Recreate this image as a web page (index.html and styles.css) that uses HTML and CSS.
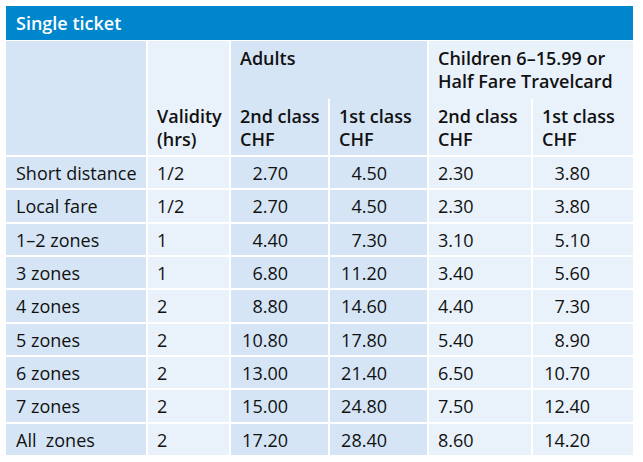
FILE: index.html
```html
<!DOCTYPE html>
<html lang="en">
<head>
<meta charset="utf-8">
<title>Single ticket</title>
<link rel="stylesheet" href="styles.css">
</head>
<body>
<div class="fares">
  <div class="title">Single ticket</div>
  <table class="fare-table">
    <colgroup>
      <col class="c-label">
      <col class="c-valid">
      <col class="c-a2">
      <col class="c-a1">
      <col class="c-k2">
      <col class="c-k1">
    </colgroup>
    <thead>
      <tr class="h1">
        <th rowspan="2" class="dark"></th>
        <th rowspan="2" class="light bottom">Validity<br>(hrs)</th>
        <th colspan="2" class="dark group">Adults</th>
        <th colspan="2" class="light group last">Children 6–15.99 or<br>Half Fare Travelcard</th>
      </tr>
      <tr class="h2">
        <th class="dark">2nd class<br>CHF</th>
        <th class="dark">1st class<br>CHF</th>
        <th class="light">2nd class<br>CHF</th>
        <th class="light last">1st class<br>CHF</th>
      </tr>
    </thead>
    <tbody>
      <tr><td class="dark">Short distance</td><td class="light">1/2</td><td class="dark num">2.70</td><td class="dark num">4.50</td><td class="light k2">2.30</td><td class="light num k1 last">3.80</td></tr>
      <tr><td class="dark">Local fare</td><td class="light">1/2</td><td class="dark num">2.70</td><td class="dark num">4.50</td><td class="light k2">2.30</td><td class="light num k1 last">3.80</td></tr>
      <tr><td class="dark">1–2 zones</td><td class="light">1</td><td class="dark num">4.40</td><td class="dark num">7.30</td><td class="light k2">3.10</td><td class="light num k1 last">5.10</td></tr>
      <tr><td class="dark">3 zones</td><td class="light">1</td><td class="dark num">6.80</td><td class="dark num">11.20</td><td class="light k2">3.40</td><td class="light num k1 last">5.60</td></tr>
      <tr><td class="dark">4 zones</td><td class="light">2</td><td class="dark num">8.80</td><td class="dark num">14.60</td><td class="light k2">4.40</td><td class="light num k1 last">7.30</td></tr>
      <tr><td class="dark">5 zones</td><td class="light">2</td><td class="dark num">10.80</td><td class="dark num">17.80</td><td class="light k2">5.40</td><td class="light num k1 last">8.90</td></tr>
      <tr><td class="dark">6 zones</td><td class="light">2</td><td class="dark num">13.00</td><td class="dark num">21.40</td><td class="light k2">6.50</td><td class="light num k1 last">10.70</td></tr>
      <tr><td class="dark">7 zones</td><td class="light">2</td><td class="dark num">15.00</td><td class="dark num">24.80</td><td class="light k2">7.50</td><td class="light num k1 last">12.40</td></tr>
      <tr><td class="dark">All&nbsp; zones</td><td class="light">2</td><td class="dark num">17.20</td><td class="dark num">28.40</td><td class="light k2">8.60</td><td class="light num k1 last">14.20</td></tr>
    </tbody>
  </table>
</div>
</body>
</html>
```

FILE: styles.css
```css
html, body {
  margin: 0;
  padding: 0;
  background: #ffffff;
}

body {
  padding: 6px;
  font-family: "Open Sans", "Noto Sans", sans-serif;
  color: #111111;
}

.fares {
  width: 627px;
}

.title {
  height: 34px;
  line-height: 34px;
  background: #0086cd;
  color: #ffffff;
  font-size: 18px;
  font-weight: 600;
  padding-left: 10px;
  margin-bottom: 1px;
}

.fare-table {
  width: 627px;
  table-layout: fixed;
  border-collapse: separate;
  border-spacing: 0;
  font-size: 18px;
}

.c-label { width: 142px; }
.c-valid { width: 83px; }
.c-a2 { width: 99px; }
.c-a1 { width: 99px; }
.c-k2 { width: 104px; }
.c-k1 { width: 100px; }

.fare-table th,
.fare-table td {
  border-right: 2px solid #ffffff;
  border-bottom: 2px solid #ffffff;
  padding: 0 0 0 9px;
  text-align: left;
  white-space: nowrap;
}

.fare-table .last {
  border-right: 0;
}

.fare-table td:first-child {
  padding-left: 10px;
}

.dark { background: #d5e5f6; }
.light { background: #e9f2fb; }

.fare-table th {
  font-weight: 600;
  line-height: 22.5px;
}

.h1 th {
  height: 52px;
  vertical-align: top;
  padding-top: 6px;
}

.h1 th.group {
  border-bottom: 0;
}

.h1 th.bottom,
.h2 th {
  vertical-align: bottom;
  padding-bottom: 5px;
}

.h2 th {
  height: 51px;
  padding-top: 0;
}

.fare-table td {
  height: 30.33px;
  line-height: 30.33px;
  padding-top: 1px;
  font-weight: 400;
}

.fare-table td.num {
  text-align: right;
  padding-right: 40px;
}

.fare-table td.k1 {
  padding-right: 43px;
}
```
